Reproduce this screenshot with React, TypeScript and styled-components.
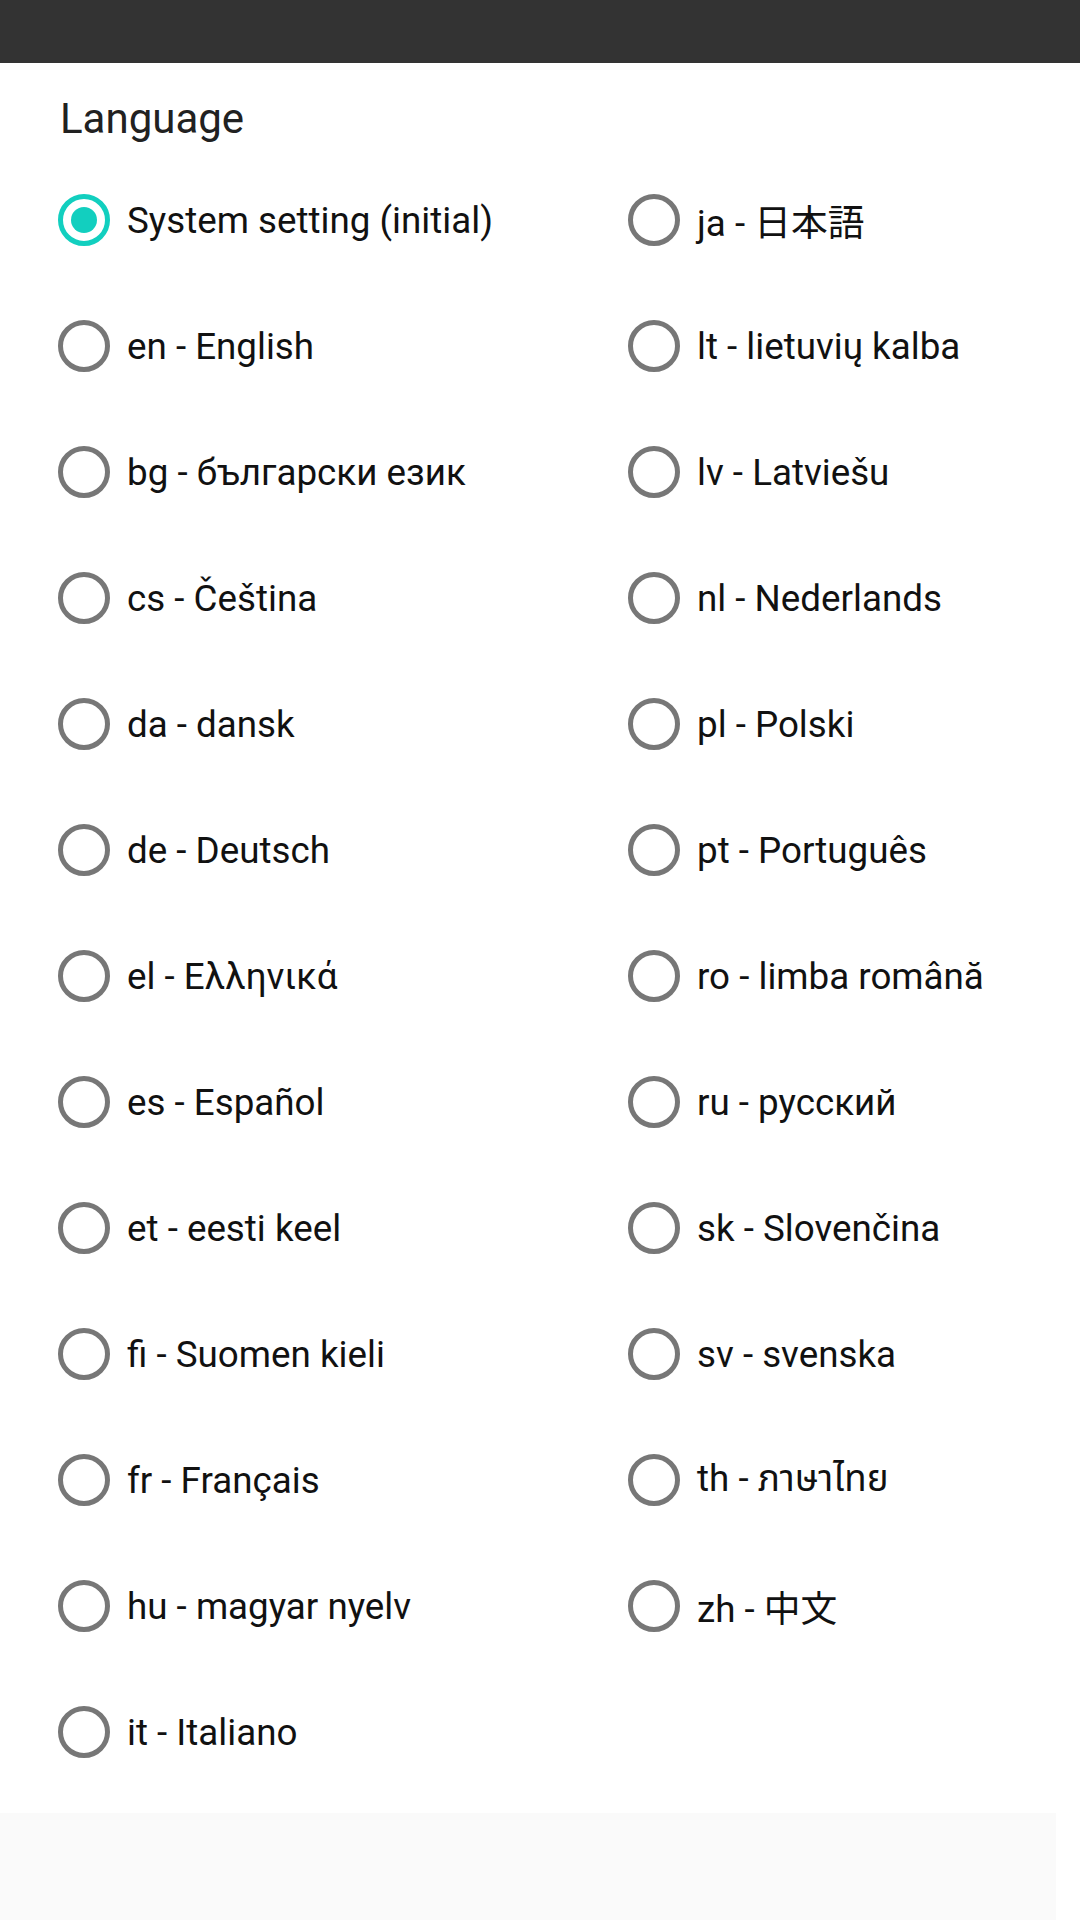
import styled, { createGlobalStyle } from 'styled-components';

const GlobalStyle = createGlobalStyle`
  html, body {
    margin: 0;
    padding: 0;
    background: #ffffff;
  }
  body {
    font-family: Roboto, "Noto Sans", "Noto Sans CJK JP", sans-serif;
  }
`;

const Screen = styled.div`
  width: 1080px;
  height: 1920px;
  display: flex;
  flex-direction: column;
  background: #ffffff;
  overflow: hidden;
`;

const StatusBar = styled.div`
  height: 63px;
  flex-shrink: 0;
  background: #333333;
`;

const Content = styled.div`
  display: flex;
  flex-direction: column;
  padding: 35px 0 0 0;
`;

const Title = styled.div`
  font-size: 42px;
  line-height: 42px;
  color: #212121;
  padding-left: 60px;
  margin-bottom: 17px;
`;

const Columns = styled.div`
  display: grid;
  grid-template-columns: 570px 1fr;
  padding-left: 58px;
`;

const Column = styled.div`
  display: flex;
  flex-direction: column;
`;

const Option = styled.div`
  height: 126px;
  display: flex;
  align-items: center;
  gap: 17px;
`;

const Radio = styled.div<{ $checked?: boolean }>`
  width: 52px;
  height: 52px;
  box-sizing: border-box;
  border-radius: 50%;
  border: 5px solid ${(p) => (p.$checked ? '#12cfbf' : '#777777')};
  display: flex;
  align-items: center;
  justify-content: center;
  flex-shrink: 0;
`;

const Dot = styled.div`
  width: 26px;
  height: 26px;
  border-radius: 50%;
  background: #12cfbf;
`;

const Label = styled.span`
  font-size: 36.75px;
  color: #111111;
  font-family: Roboto, "Noto Sans", "Noto Sans Thai", "Noto Sans CJK JP", sans-serif;
  white-space: nowrap;
`;

const Footer = styled.div`
  margin-top: auto;
  height: 107px;
  width: 1056px;
  background: #fafafa;
  flex-shrink: 0;
`;

const left = [
  'System setting (initial)',
  'en - English',
  'bg - български език',
  'cs - Čeština',
  'da - dansk',
  'de - Deutsch',
  'el - Ελληνικά',
  'es - Español',
  'et - eesti keel',
  'fi - Suomen kieli',
  'fr - Français',
  'hu - magyar nyelv',
  'it - Italiano',
];

const right = [
  'ja - 日本語',
  'lt - lietuvių kalba',
  'lv - Latviešu',
  'nl - Nederlands',
  'pl - Polski',
  'pt - Português',
  'ro - limba română',
  'ru - русский',
  'sk - Slovenčina',
  'sv - svenska',
  'th - ภาษาไทย',
  'zh - 中文',
];

function LanguageOption({ label, checked }: { label: string; checked?: boolean }) {
  return (
    <Option>
      <Radio $checked={checked}>{checked && <Dot />}</Radio>
      <Label>{label}</Label>
    </Option>
  );
}

export default function App() {
  return (
    <Screen>
      <GlobalStyle />
      <StatusBar />
      <Content>
        <Title>Language</Title>
        <Columns>
          <Column>
            {left.map((l, i) => (
              <LanguageOption key={l} label={l} checked={i === 0} />
            ))}
          </Column>
          <Column>
            {right.map((l) => (
              <LanguageOption key={l} label={l} />
            ))}
          </Column>
        </Columns>
      </Content>
      <Footer />
    </Screen>
  );
}
